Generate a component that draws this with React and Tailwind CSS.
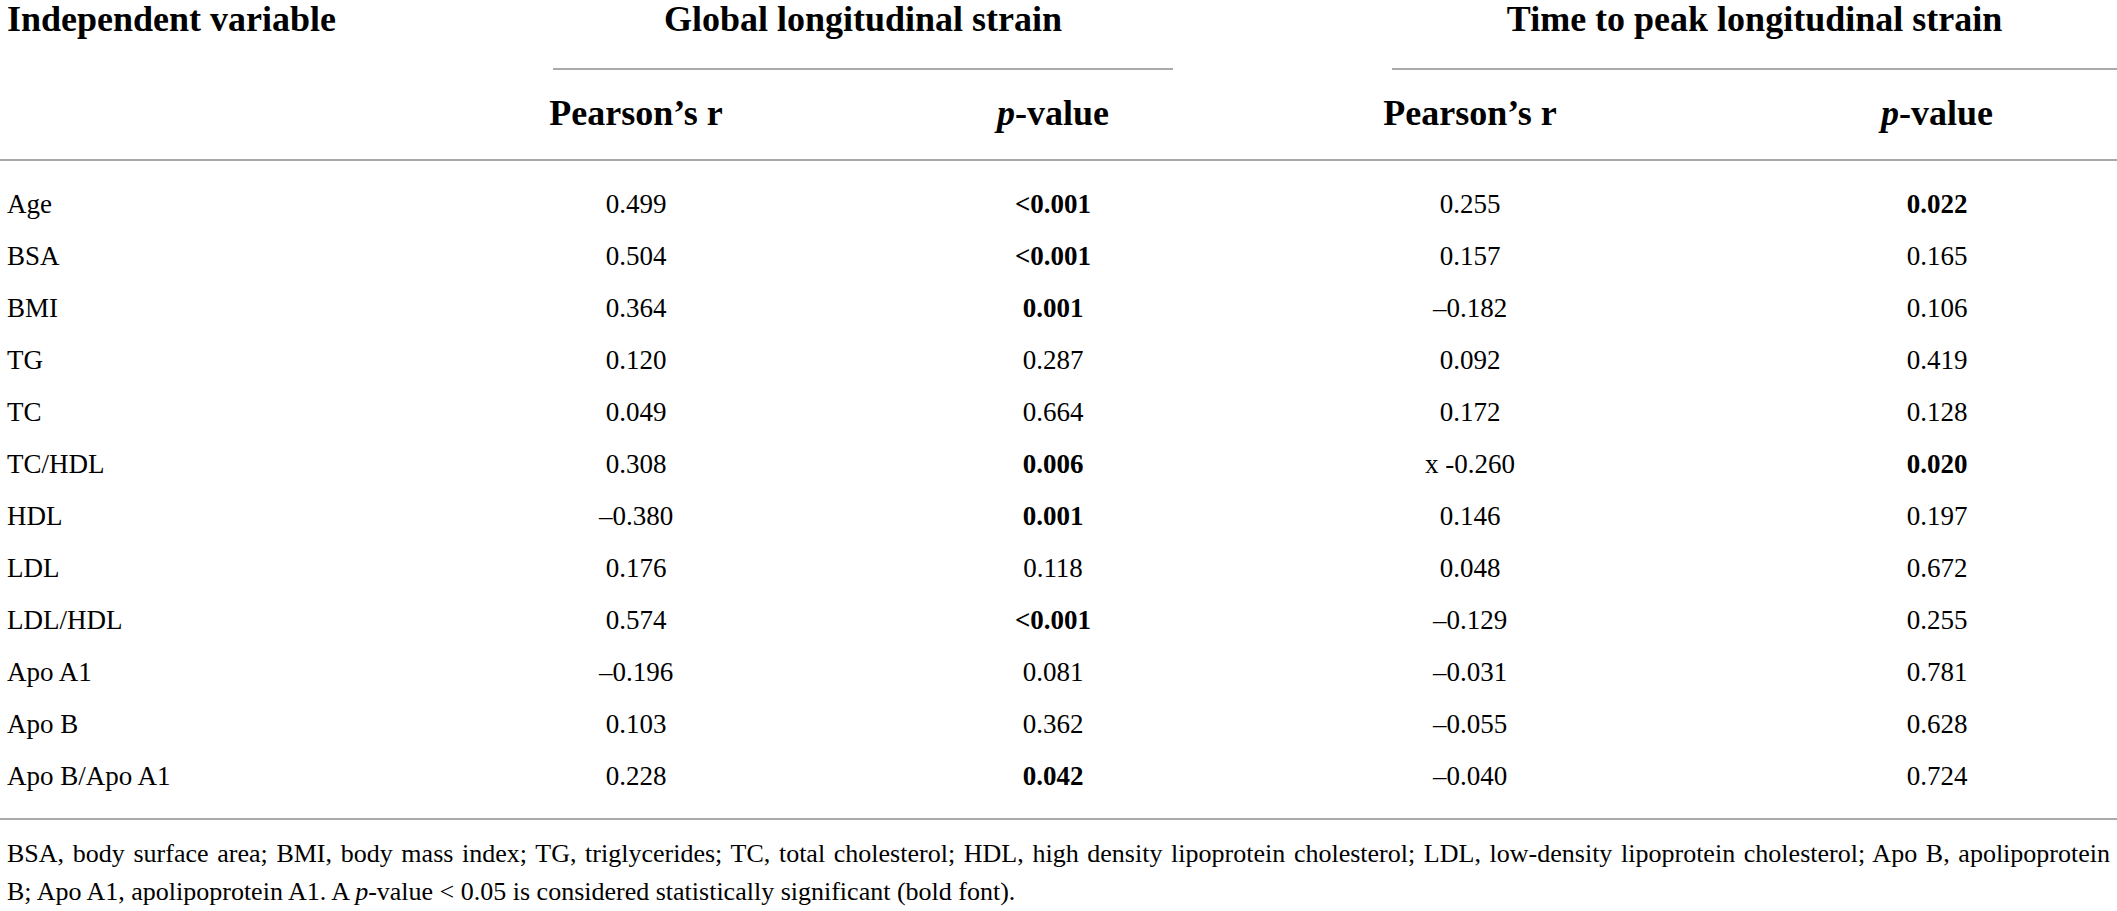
import React from "react";

const rows = [
  ["Age", "0.499", "<0.001", true, "0.255", "0.022", true],
  ["BSA", "0.504", "<0.001", true, "0.157", "0.165", false],
  ["BMI", "0.364", "0.001", true, "–0.182", "0.106", false],
  ["TG", "0.120", "0.287", false, "0.092", "0.419", false],
  ["TC", "0.049", "0.664", false, "0.172", "0.128", false],
  ["TC/HDL", "0.308", "0.006", true, "x -0.260", "0.020", true],
  ["HDL", "–0.380", "0.001", true, "0.146", "0.197", false],
  ["LDL", "0.176", "0.118", false, "0.048", "0.672", false],
  ["LDL/HDL", "0.574", "<0.001", true, "–0.129", "0.255", false],
  ["Apo A1", "–0.196", "0.081", false, "–0.031", "0.781", false],
  ["Apo B", "0.103", "0.362", false, "–0.055", "0.628", false],
  ["Apo B/Apo A1", "0.228", "0.042", true, "–0.040", "0.724", false],
];

const grid = "grid grid-cols-[427px_418px_416px_418px_438px]";

function PValue() {
  return (
    <span>
      <i>p</i>-value
    </span>
  );
}

export default function App() {
  return (
    <div
      className="w-[2117px] h-[911px] overflow-hidden bg-white text-black"
      style={{ fontFamily: '"Liberation Serif", "Times New Roman", serif' }}
    >
      {/* Header row 1 */}
      <div className="flex h-[70px] text-[36px] leading-[36px] font-bold">
        <div className="w-[553px] pl-[7px] pt-[1px]">Independent variable</div>
        <div className="w-[620px] text-center pt-[1px] border-b-2 border-[#a9a9a9]">
          Global longitudinal strain
        </div>
        <div className="w-[219px]" />
        <div className="w-[725px] text-center pt-[1px] border-b-2 border-[#a9a9a9]">
          Time to peak longitudinal strain
        </div>
      </div>

      {/* Header row 2 */}
      <div
        className={`${grid} pt-[25px] pb-[28px] text-[36px] leading-[36px] font-bold border-b-2 border-[#a9a9a9]`}
      >
        <div />
        <div className="text-center">Pearson’s r</div>
        <div className="text-center">
          <PValue />
        </div>
        <div className="text-center">Pearson’s r</div>
        <div className="text-center pl-[78px]">
          <PValue />
        </div>
      </div>

      {/* Body */}
      <div className="pt-[17px] pb-[16px] border-b-2 border-[#a9a9a9] text-[27px] leading-[52px]">
        {rows.map((r) => (
          <div key={r[0]} className={`${grid} h-[52px]`}>
            <div className="pl-[7px]">{r[0]}</div>
            <div className="text-center">{r[1]}</div>
            <div className={`text-center ${r[3] ? "font-bold" : ""}`}>{r[2]}</div>
            <div className="text-center">{r[4]}</div>
            <div className={`text-center pl-[78px] ${r[6] ? "font-bold" : ""}`}>{r[5]}</div>
          </div>
        ))}
      </div>

      {/* Footnote */}
      <div className="pt-[15px] px-[7px] text-[26px] leading-[38px]">
        <div className="text-justify [text-align-last:justify]">
          BSA, body surface area; BMI, body mass index; TG, triglycerides; TC, total cholesterol; HDL, high density
          lipoprotein cholesterol; LDL, low-density lipoprotein cholesterol; Apo B, apolipoprotein
        </div>
        <div>
          B; Apo A1, apolipoprotein A1. A <i>p</i>-value &lt; 0.05 is considered statistically significant (bold
          font).
        </div>
      </div>
    </div>
  );
}
